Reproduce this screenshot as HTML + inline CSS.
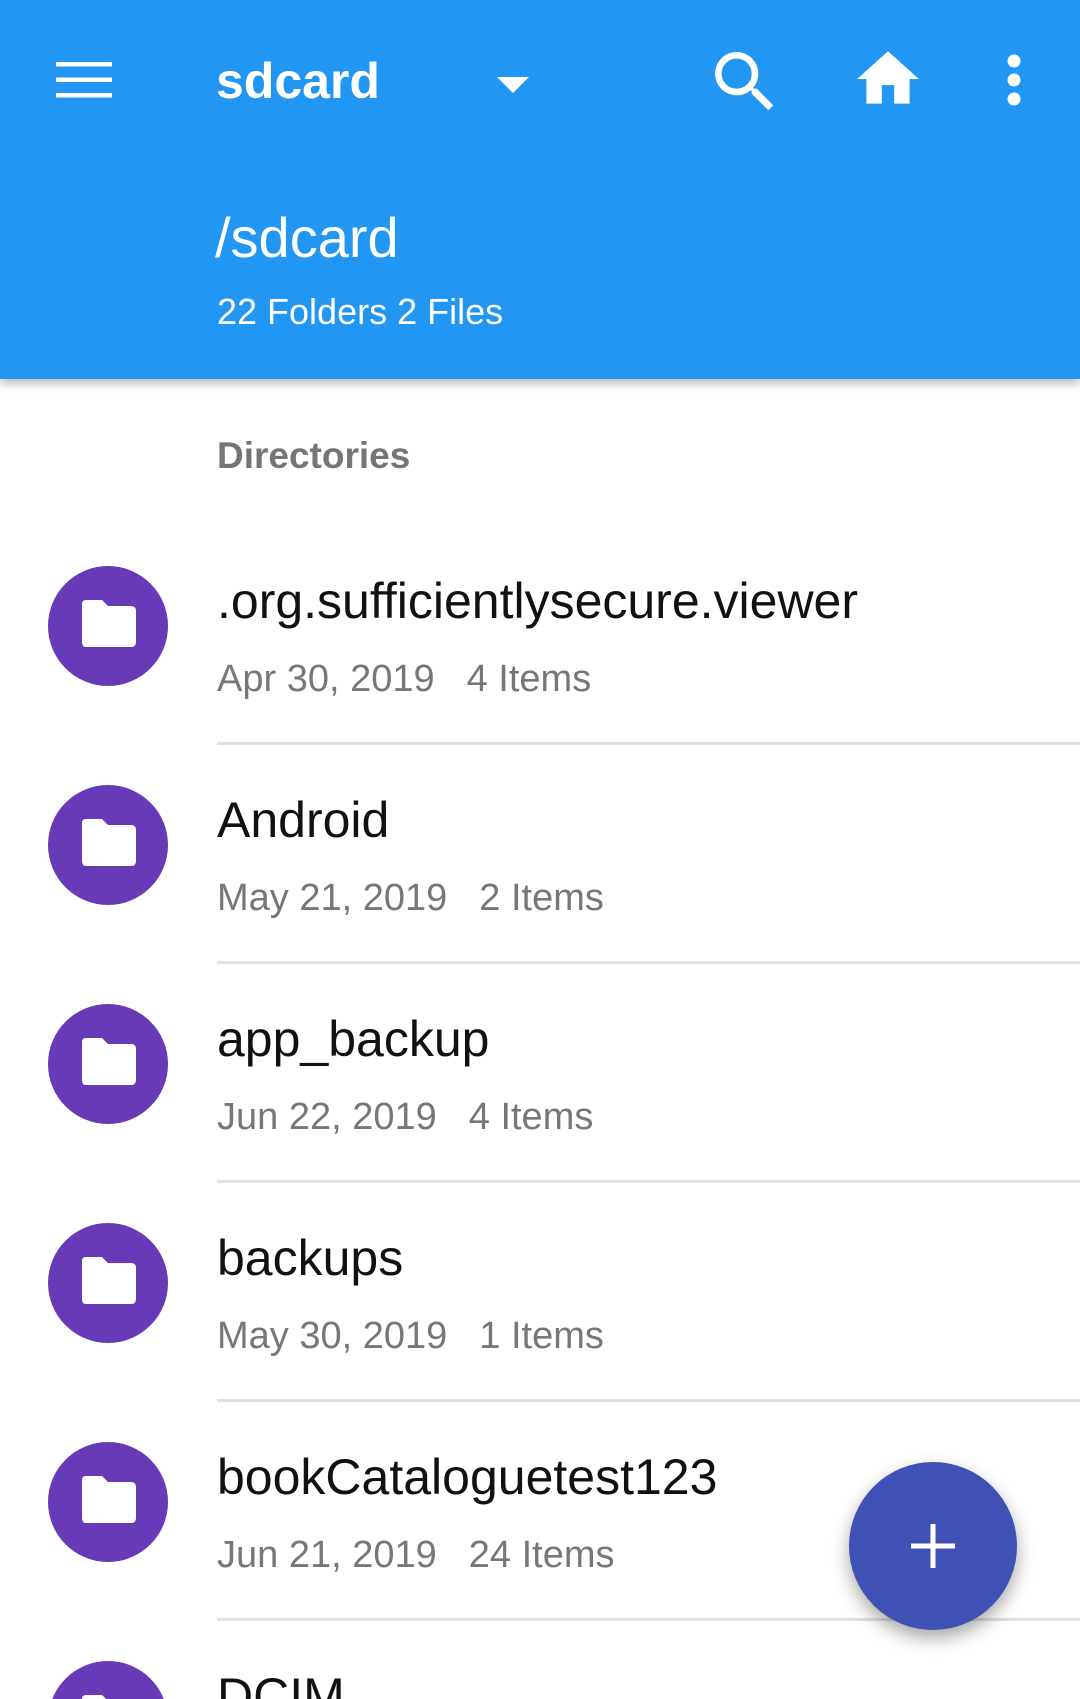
<!DOCTYPE html>
<html><head><meta charset="utf-8"><style>
html,body{margin:0;padding:0;width:1080px;height:1699px;overflow:hidden;}
body{position:relative;background:#fff;font-family:"Liberation Sans",sans-serif;}
.hdr{position:absolute;left:0;top:0;width:1080px;height:379px;background:#2196F3;box-shadow:0 4px 10px rgba(0,0,0,0.3);z-index:2}
.t{position:absolute;white-space:nowrap;line-height:1}
.row{position:absolute;left:0;width:1080px;height:219px;overflow:hidden}
.circ{position:absolute;left:48px;top:0;width:120px;height:120px;border-radius:50%;background:#673AB7}
.circ svg{position:absolute;left:30px;top:32px}
.name{position:absolute;left:217px;top:6px;font-size:50px;color:#111;white-space:nowrap}
.sub{position:absolute;left:217px;top:92px;font-size:38px;color:#777;white-space:nowrap}
.sub span{margin-left:32px}
.div{position:absolute;left:217px;right:0;top:176px;height:3px;background:#e0e0e0}
.fab{position:absolute;left:849px;top:1462px;width:168px;height:168px;border-radius:50%;background:#3F51B5;box-shadow:0 8px 18px rgba(0,0,0,0.35);z-index:3}
</style></head><body>
<div class="hdr">
  <svg style="position:absolute;left:56px;top:62px" width="56" height="36" viewBox="0 0 56 36"><rect y="0" width="56" height="4.5" fill="#fff"/><rect y="15.5" width="56" height="4.5" fill="#fff"/><rect y="31" width="56" height="4.5" fill="#fff"/></svg>
  <div class="t" style="left:216px;top:56px;font-size:50px;font-weight:bold;color:#fff">sdcard</div>
  <svg style="position:absolute;left:497px;top:77px" width="32" height="16" viewBox="0 0 32 16"><path d="M0 0H32L16 16Z" fill="#fff"/></svg>
  <svg style="position:absolute;left:705px;top:42px" width="80" height="80" viewBox="0 0 24 24"><path fill="#fff" d="M15.5 14h-.79l-.28-.27A6.47 6.47 0 0 0 16 9.5 6.5 6.5 0 1 0 9.5 16c1.61 0 3.09-.59 4.23-1.57l.27.28v.79l5 4.99L20.49 19l-4.99-5zm-6 0C7.01 14 5 11.99 5 9.5S7.01 5 9.5 5 14 7.01 14 9.5 11.99 14 9.5 14z"/></svg>
  <svg style="position:absolute;left:851px;top:42px" width="74" height="74" viewBox="0 0 24 24"><path fill="#fff" d="M10 20v-6h4v6h5v-8h3L12 3 2 12h3v8z"/></svg>
  <svg style="position:absolute;left:1000px;top:54px" width="28" height="52" viewBox="0 0 28 52"><circle cx="14" cy="7" r="6.5" fill="#fff"/><circle cx="14" cy="26" r="6.5" fill="#fff"/><circle cx="14" cy="45" r="6.5" fill="#fff"/></svg>
  <div class="t" style="left:215px;top:210px;font-size:56px;color:#fff">/sdcard</div>
  <div class="t" style="left:217px;top:294px;font-size:36px;color:#fff">22 Folders 2 Files</div>
</div>
<div class="t" style="left:217px;top:437px;font-size:37px;font-weight:bold;color:#757575">Directories</div>

<div class="row" style="top:566px"><div class="circ"><svg width="60" height="56" viewBox="0 0 60 56"><path d="M4 6Q4 2 8 2H24L30 8H53Q58 8 58 13V44Q58 49 53 49H8Q4 49 4 44Z" fill="#fff"/></svg></div><div class="name">.org.sufficientlysecure.viewer</div><div class="sub">Apr 30, 2019<span>4 Items</span></div><div class="div"></div></div>
<div class="row" style="top:785px"><div class="circ"><svg width="60" height="56" viewBox="0 0 60 56"><path d="M4 6Q4 2 8 2H24L30 8H53Q58 8 58 13V44Q58 49 53 49H8Q4 49 4 44Z" fill="#fff"/></svg></div><div class="name">Android</div><div class="sub">May 21, 2019<span>2 Items</span></div><div class="div"></div></div>
<div class="row" style="top:1004px"><div class="circ"><svg width="60" height="56" viewBox="0 0 60 56"><path d="M4 6Q4 2 8 2H24L30 8H53Q58 8 58 13V44Q58 49 53 49H8Q4 49 4 44Z" fill="#fff"/></svg></div><div class="name">app_backup</div><div class="sub">Jun 22, 2019<span>4 Items</span></div><div class="div"></div></div>
<div class="row" style="top:1223px"><div class="circ"><svg width="60" height="56" viewBox="0 0 60 56"><path d="M4 6Q4 2 8 2H24L30 8H53Q58 8 58 13V44Q58 49 53 49H8Q4 49 4 44Z" fill="#fff"/></svg></div><div class="name">backups</div><div class="sub">May 30, 2019<span>1 Items</span></div><div class="div"></div></div>
<div class="row" style="top:1442px"><div class="circ"><svg width="60" height="56" viewBox="0 0 60 56"><path d="M4 6Q4 2 8 2H24L30 8H53Q58 8 58 13V44Q58 49 53 49H8Q4 49 4 44Z" fill="#fff"/></svg></div><div class="name">bookCataloguetest123</div><div class="sub">Jun 21, 2019<span>24 Items</span></div><div class="div"></div></div>
<div class="row" style="top:1661px;height:38px"><div class="circ"><svg width="60" height="56" viewBox="0 0 60 56"><path d="M4 6Q4 2 8 2H24L30 8H53Q58 8 58 13V44Q58 49 53 49H8Q4 49 4 44Z" fill="#fff"/></svg></div><div class="name">DCIM</div></div>

<div class="fab"><svg style="position:absolute;left:62px;top:62px" width="44" height="44" viewBox="0 0 44 44"><rect x="19.5" y="0" width="5" height="44" fill="#fff"/><rect x="0" y="19.5" width="44" height="5" fill="#fff"/></svg></div>
</body></html>
